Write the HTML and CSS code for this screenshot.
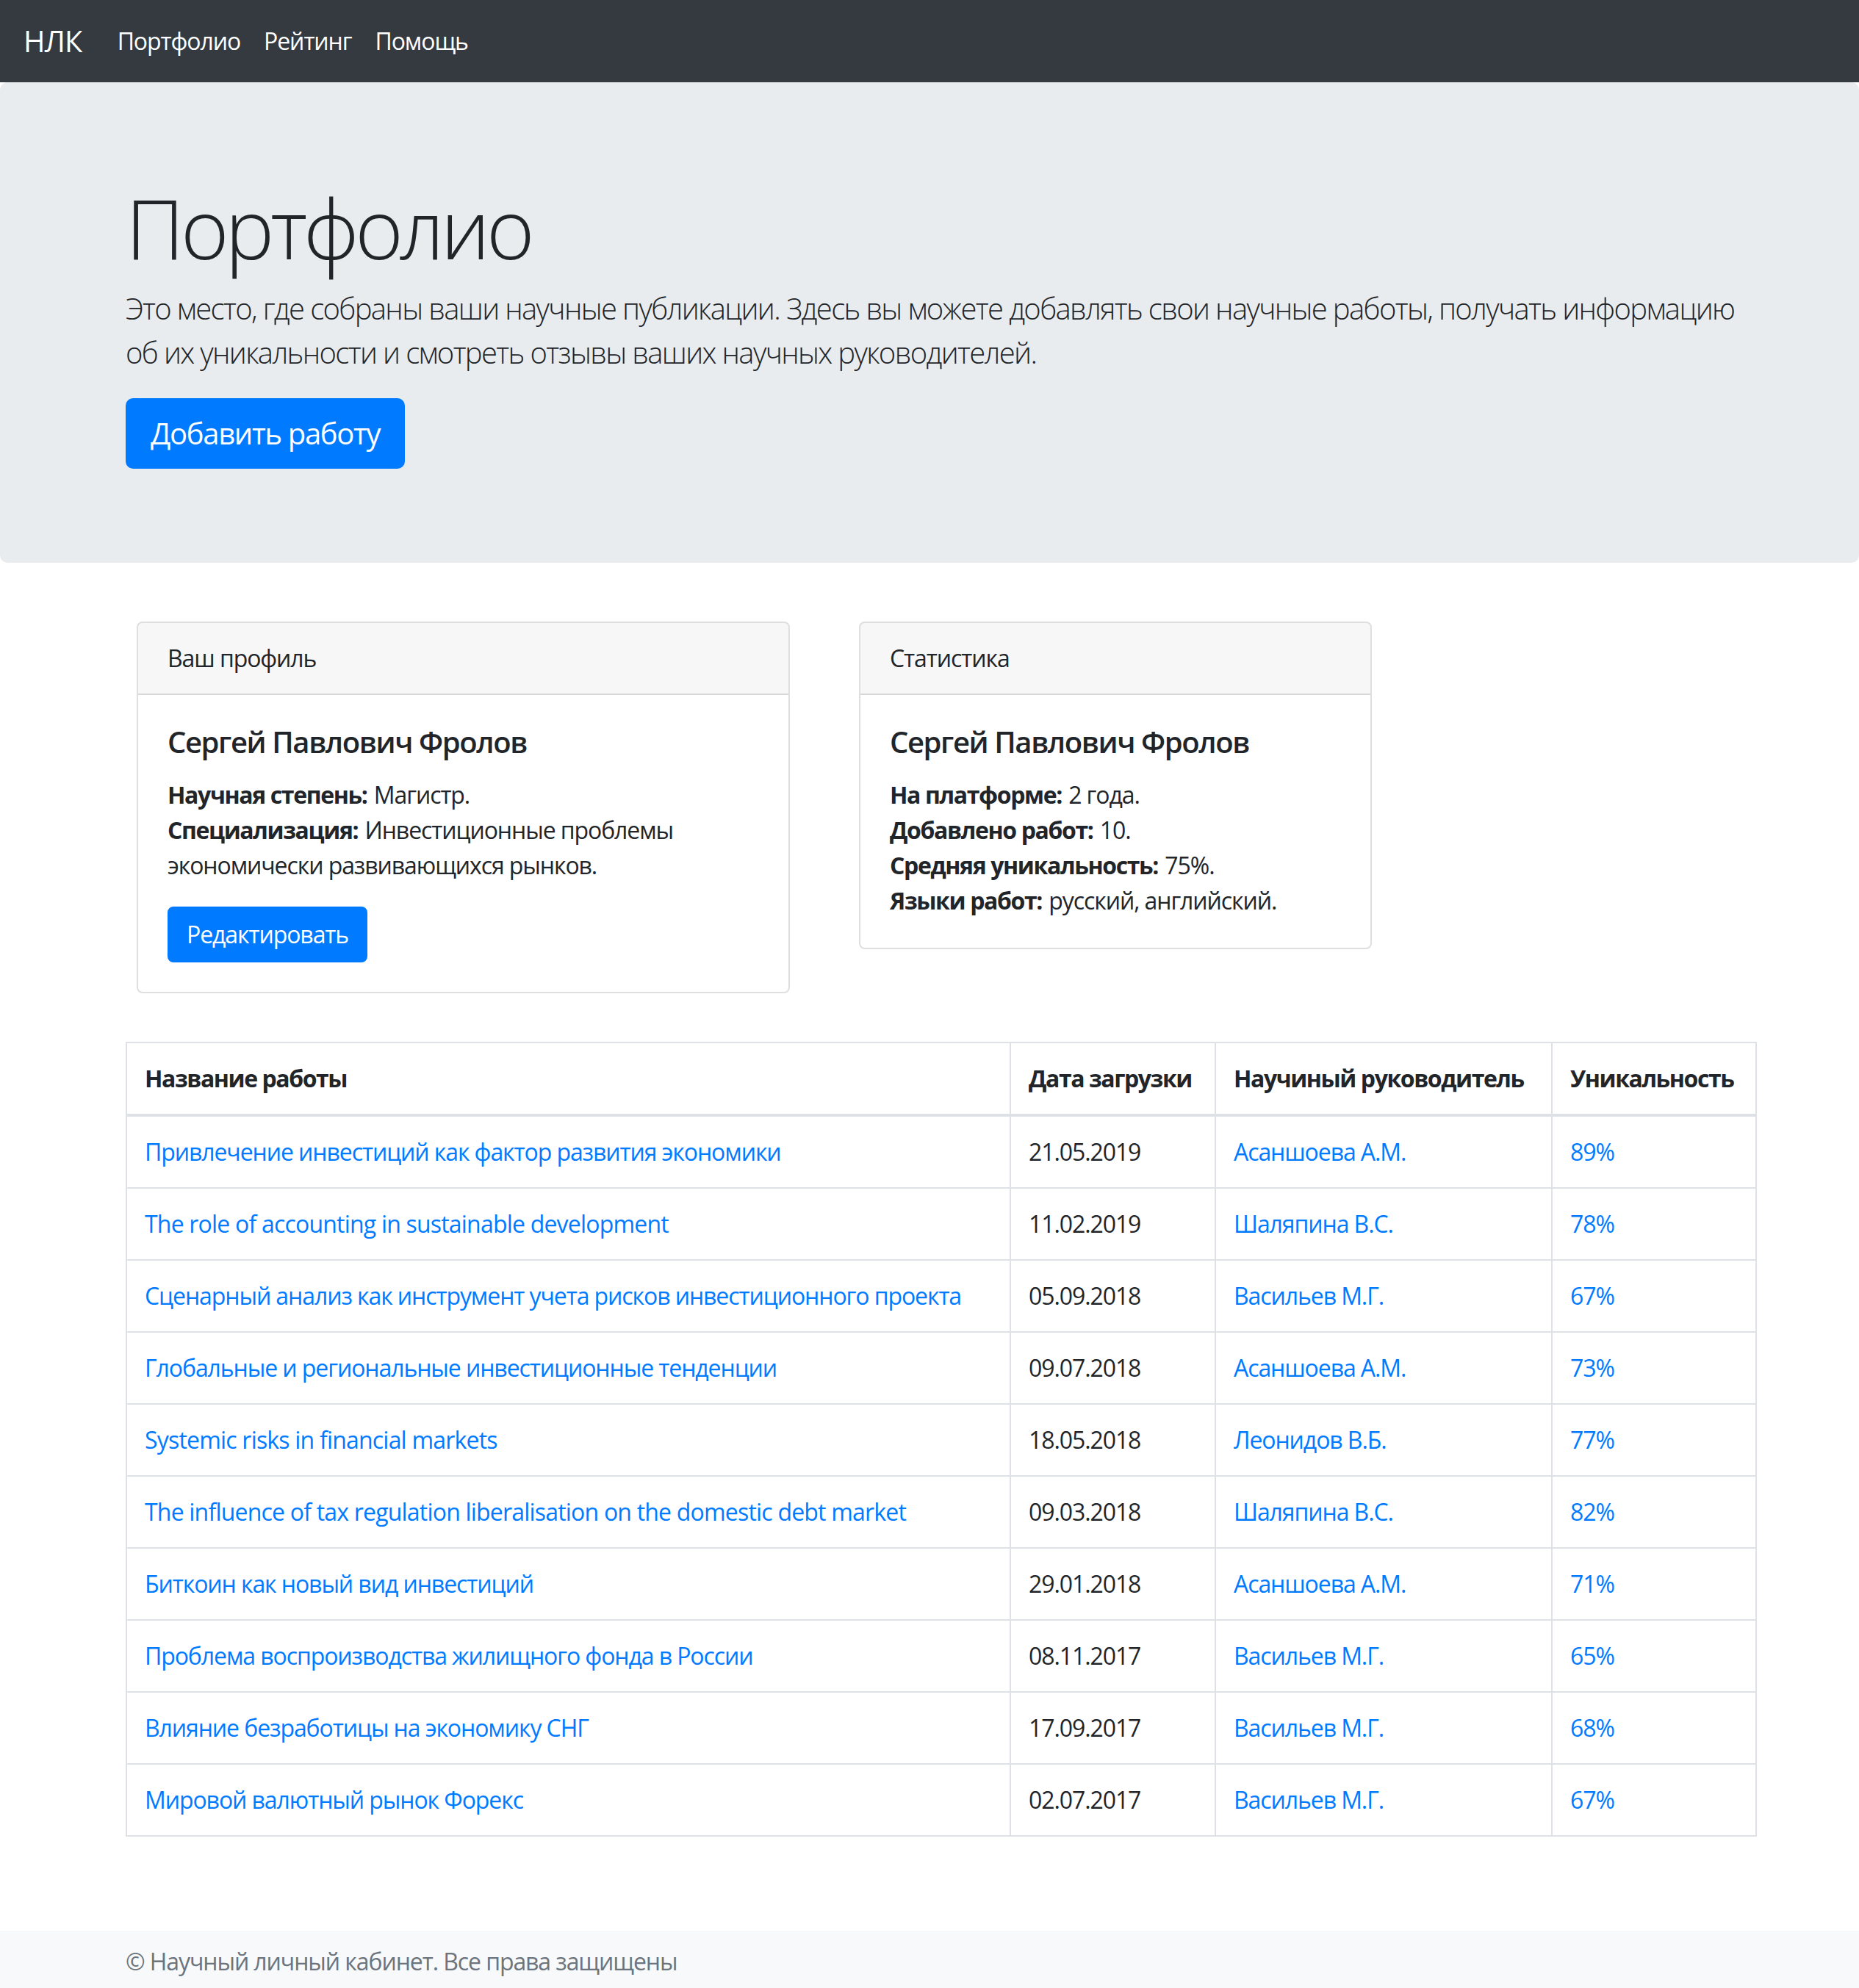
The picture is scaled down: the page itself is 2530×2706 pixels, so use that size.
FILE: index.html
```html
<!DOCTYPE html>
<html lang="ru">
<head>
<meta charset="utf-8">
<title>Портфолио</title>
<link rel="stylesheet" href="styles.css">
</head>
<body>
<nav class="navbar">
  <a class="navbar-brand" href="#">НЛК</a>
  <ul class="navbar-nav">
    <li><a class="nav-link" href="#">Портфолио</a></li>
    <li><a class="nav-link" href="#">Рейтинг</a></li>
    <li><a class="nav-link" href="#">Помощь</a></li>
  </ul>
</nav>

<section class="jumbotron">
  <div class="container">
    <h1 class="display-title">Портфолио</h1>
    <p class="lead">Это место, где собраны ваши научные публикации. Здесь вы можете добавлять свои научные работы, получать информацию об их уникальности и смотреть отзывы ваших научных руководителей.</p>
    <a class="btn btn-lg" href="#">Добавить работу</a>
  </div>
</section>

<main class="container">
  <div class="cards">
    <div class="card card-profile">
      <div class="card-header">Ваш профиль</div>
      <div class="card-body">
        <h5 class="card-title">Сергей Павлович Фролов</h5>
        <p class="card-text"><strong>Научная степень:</strong> Магистр.<br><strong>Специализация:</strong> Инвестиционные проблемы экономически развивающихся рынков.</p>
        <a class="btn" href="#">Редактировать</a>
      </div>
    </div>
    <div class="card card-stats">
      <div class="card-header">Статистика</div>
      <div class="card-body">
        <h5 class="card-title">Сергей Павлович Фролов</h5>
        <p class="card-text"><strong>На платформе:</strong> 2 года.<br><strong>Добавлено работ:</strong> 10.<br><strong>Средняя уникальность:</strong> 75%.<br><strong>Языки работ:</strong> русский, английский.</p>
      </div>
    </div>
  </div>

  <table class="table">
    <thead>
      <tr>
        <th class="col-name">Название работы</th>
        <th class="col-date">Дата загрузки</th>
        <th class="col-sup">Научиный руководитель</th>
        <th class="col-uniq">Уникальность</th>
      </tr>
    </thead>
    <tbody>
      <tr><td><a href="#">Привлечение инвестиций как фактор развития экономики</a></td><td>21.05.2019</td><td><a href="#">Асаншоева А.М.</a></td><td><a href="#">89%</a></td></tr>
      <tr><td><a href="#" lang="en" class="latin">The role of accounting in sustainable development</a></td><td>11.02.2019</td><td><a href="#">Шаляпина В.С.</a></td><td><a href="#">78%</a></td></tr>
      <tr><td><a href="#">Сценарный анализ как инструмент учета рисков инвестиционного проекта</a></td><td>05.09.2018</td><td><a href="#">Васильев М.Г.</a></td><td><a href="#">67%</a></td></tr>
      <tr><td><a href="#">Глобальные и региональные инвестиционные тенденции</a></td><td>09.07.2018</td><td><a href="#">Асаншоева А.М.</a></td><td><a href="#">73%</a></td></tr>
      <tr><td><a href="#" lang="en" class="latin">Systemic risks in financial markets</a></td><td>18.05.2018</td><td><a href="#">Леонидов В.Б.</a></td><td><a href="#">77%</a></td></tr>
      <tr><td><a href="#" lang="en" class="latin">The influence of tax regulation liberalisation on the domestic debt market</a></td><td>09.03.2018</td><td><a href="#">Шаляпина В.С.</a></td><td><a href="#">82%</a></td></tr>
      <tr><td><a href="#">Биткоин как новый вид инвестиций</a></td><td>29.01.2018</td><td><a href="#">Асаншоева А.М.</a></td><td><a href="#">71%</a></td></tr>
      <tr><td><a href="#">Проблема воспроизводства жилищного фонда в России</a></td><td>08.11.2017</td><td><a href="#">Васильев М.Г.</a></td><td><a href="#">65%</a></td></tr>
      <tr><td><a href="#">Влияние безработицы на экономику СНГ</a></td><td>17.09.2017</td><td><a href="#">Васильев М.Г.</a></td><td><a href="#">68%</a></td></tr>
      <tr><td><a href="#">Мировой валютный рынок Форекс</a></td><td>02.07.2017</td><td><a href="#">Васильев М.Г.</a></td><td><a href="#">67%</a></td></tr>
    </tbody>
  </table>
</main>

<footer class="footer">
  <div class="container">
    <span class="footer-text">© Научный личный кабинет. Все права защищены</span>
  </div>
</footer>
</body>
</html>
```

FILE: styles.css
```css
* { box-sizing: border-box; }

html, body {
  margin: 0;
  padding: 0;
}

body {
  font-family: "Segoe UI", "Open Sans", "Noto Sans", sans-serif;
  font-size: 32px;
  line-height: 48px;
  letter-spacing: -0.034em;
  color: #212529;
  background: #fff;
}

a { color: #007bff; text-decoration: none; }

.latin { letter-spacing: -0.025em; }

.container {
  width: 2220px;
  margin-left: 171px;
}

/* Navbar */
.navbar {
  display: flex;
  align-items: center;
  height: 112px;
  padding: 16px 32px;
  background: #343a40;
}

.navbar-brand {
  font-size: 40px;
  line-height: 60px;
  letter-spacing: -0.02em;
  padding: 10px 0;
  margin-right: 32px;
  color: #fff;
}

.navbar-nav {
  display: flex;
  list-style: none;
  margin: 0;
  padding: 0;
}

.nav-link {
  display: block;
  padding: 16px;
  color: #fff;
}

/* Jumbotron */
.jumbotron {
  background: #e9ecef;
  padding: 128px 0;
  margin-bottom: 64px;
  border-radius: 10px;
}

.display-title {
  font-size: 112px;
  font-weight: 300;
  line-height: 1.2;
  letter-spacing: -0.045em;
  margin: 0 0 16px;
  position: relative;
  top: 3px;
}

.lead {
  font-size: 40px;
  font-weight: 300;
  line-height: 60px;
  letter-spacing: -0.041em;
  margin: 0 0 32px;
}

.btn {
  display: inline-block;
  background: #007bff;
  color: #fff;
  border: 2px solid #007bff;
  border-radius: 8px;
  padding: 12px 24px;
  font-size: 32px;
  line-height: 48px;
}

.btn-lg {
  font-size: 40px;
  line-height: 60px;
  letter-spacing: -0.033em;
  padding: 16px 32px;
  border-radius: 10px;
}

/* Cards */
.cards {
  display: flex;
  align-items: flex-start;
  gap: 94px;
  padding: 16px 0 0 15px;
}

.card {
  border: 2px solid rgba(0, 0, 0, 0.125);
  border-radius: 8px;
  background: #fff;
  overflow: hidden;
}

.card-profile { width: 889px; }
.card-stats { width: 698px; }

.card-header {
  padding: 24px 40px;
  background: rgba(0, 0, 0, 0.03);
  border-bottom: 2px solid rgba(0, 0, 0, 0.125);
}

.card-body {
  padding: 40px;
}

.card-title {
  font-size: 40px;
  font-weight: 600;
  line-height: 48px;
  letter-spacing: -0.035em;
  margin: 0 0 24px;
}

.card-text {
  margin: 0 0 32px;
}

.card-text:last-child { margin-bottom: 0; }

strong {
  font-weight: 700;
  letter-spacing: -0.043em;
  margin-right: 2px;
}

/* Table */
.table {
  width: 2218px;
  margin-top: 66px;
  border-collapse: collapse;
  table-layout: fixed;
}

.table th,
.table td {
  border: 2px solid #dee2e6;
  padding: 24px;
  text-align: left;
  vertical-align: top;
  white-space: nowrap;
}

.table th {
  font-weight: 700;
  letter-spacing: -0.045em;
  vertical-align: bottom;
}

.table thead th {
  border-bottom-width: 4px;
}

.col-name { width: 1203px; }
.col-date { width: 279px; }
.col-sup { width: 458px; }
.col-uniq { width: 278px; }

/* Footer */
.footer {
  margin-top: 128px;
  background: #f8f9fa;
  padding: 18px 0 15px;
}

.footer-text {
  color: #6c757d;
}
```
